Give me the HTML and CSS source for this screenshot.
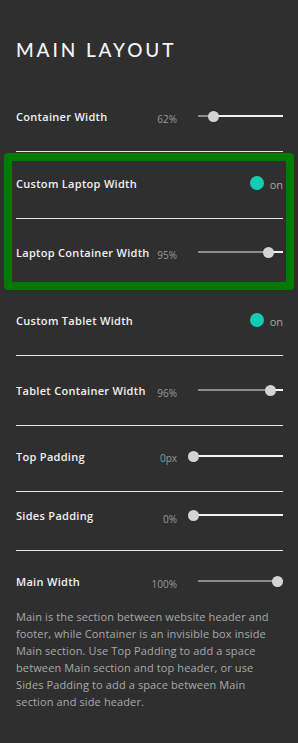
FILE: index.html
```html
<!DOCTYPE html>
<html>
<head>
<meta charset="utf-8">
<link rel="stylesheet" href="styles.css">
</head>
<body>
<div class="panel">
  <h1 class="title">MAIN LAYOUT</h1>

  <div class="row row--first">
    <span class="label">Container Width</span>
    <span class="value">62%</span>
    <div class="slider"><div class="track"><div class="fill" style="width:15px"></div></div><div class="thumb" style="left:19.5px"></div></div>
  </div>

  <div class="group">
    <div class="highlight"></div>
    <div class="row row--p23">
      <span class="label">Custom Laptop Width</span>
      <div class="toggle"><span class="dot"></span><span class="on">on</span></div>
    </div>
    <div class="row row--p25">
      <span class="label">Laptop Container Width</span>
      <span class="value">95%</span>
      <div class="slider"><div class="track"><div class="fill" style="width:70px"></div></div><div class="thumb" style="left:74.5px"></div></div>
    </div>
  </div>

  <div class="row row--p24">
    <span class="label">Custom Tablet Width</span>
    <div class="toggle"><span class="dot"></span><span class="on">on</span></div>
  </div>

  <div class="row row--p26">
    <span class="label">Tablet Container Width</span>
    <span class="value">96%</span>
    <div class="slider"><div class="track"><div class="fill" style="width:72px"></div></div><div class="thumb" style="left:76.5px"></div></div>
  </div>

  <div class="row row--p22">
    <span class="label">Top Padding</span>
    <span class="value value--low">0px</span>
    <div class="slider"><div class="track"><div class="fill" style="width:0px"></div></div><div class="thumb" style="left:0px"></div></div>
  </div>

  <div class="row row--p15">
    <span class="label">Sides Padding</span>
    <span class="value value--lower">0%</span>
    <div class="slider"><div class="track"><div class="fill" style="width:0px"></div></div><div class="thumb" style="left:0px"></div></div>
  </div>

  <div class="row row--p22 row--last">
    <span class="label">Main Width</span>
    <span class="value">100%</span>
    <div class="slider"><div class="track"><div class="fill" style="width:84px"></div></div><div class="thumb" style="left:84px"></div></div>
  </div>

  <p class="note">Main is the section between website header and footer, while Container is an invisible box inside Main section. Use Top Padding to add a space between Main section and top header, or use Sides Padding to add a space between Main section and side header.</p>
</div>
</body>
</html>
```

FILE: styles.css
```css
html, body {
  margin: 0;
  padding: 0;
  background: #2f2f2f;
}

body {
  width: 298px;
  height: 743px;
  overflow: hidden;
  font-family: "Open Sans", "Lato", sans-serif;
}

.panel {
  padding: 0 15px 0 16px;
}

.title {
  margin: 40px 0 0;
  font-family: "Lato", sans-serif;
  font-weight: 500;
  font-size: 19px;
  line-height: 20px;
  letter-spacing: 2.9px;
  color: #f4f4f4;
}

.row {
  display: flex;
  align-items: center;
  height: 16px;
  padding-bottom: 27px;
  border-bottom: 1px solid #e6e6e6;
}

.row--first { padding-top: 48px; }
.row--p23 { padding-top: 23px; }
.row--p25 { padding-top: 25px; }
.row--p24 { padding-top: 24px; }
.row--p26 { padding-top: 26px; }
.row--p22 { padding-top: 22px; }
.row--p15 { padding-top: 15px; }
.row--last { border-bottom: none; padding-bottom: 0; }

.label {
  flex: 1;
  font-size: 11px;
  font-weight: 600;
  letter-spacing: 0.3px;
  color: #f0f0f0;
  white-space: nowrap;
}

.value {
  margin-top: 6px;
  margin-right: 11px;
  font-size: 10px;
  color: #9a9a9a;
}

.value--low { margin-top: 4px; }
.value--lower { margin-top: 8px; }

.slider {
  position: relative;
  width: 95px;
  height: 12px;
  flex: none;
}

.track {
  position: absolute;
  left: 10px;
  right: 0;
  top: 5px;
  height: 2px;
  background: #f2f2f2;
}

.fill {
  height: 100%;
  background: #8c8c8c;
}

.thumb {
  position: absolute;
  top: 0.5px;
  width: 11px;
  height: 11px;
  border-radius: 50%;
  background: #d4d4d4;
}

.toggle {
  display: flex;
  align-items: center;
  gap: 6px;
}

.dot {
  width: 14px;
  height: 14px;
  border-radius: 50%;
  background: #14ccb4;
}

.on {
  margin-top: 2px;
  font-size: 11px;
  color: #a8a8a8;
}

.group {
  position: relative;
}

.highlight {
  position: absolute;
  left: -12px;
  right: -11px;
  top: 1px;
  bottom: -2px;
  border: 8px solid #007b00;
  border-radius: 4px;
  pointer-events: none;
  z-index: 2;
}

.note {
  margin: 19px 0 0;
  font-size: 11px;
  line-height: 17px;
  letter-spacing: 0.12px;
  color: #a9a9a9;
}
```
